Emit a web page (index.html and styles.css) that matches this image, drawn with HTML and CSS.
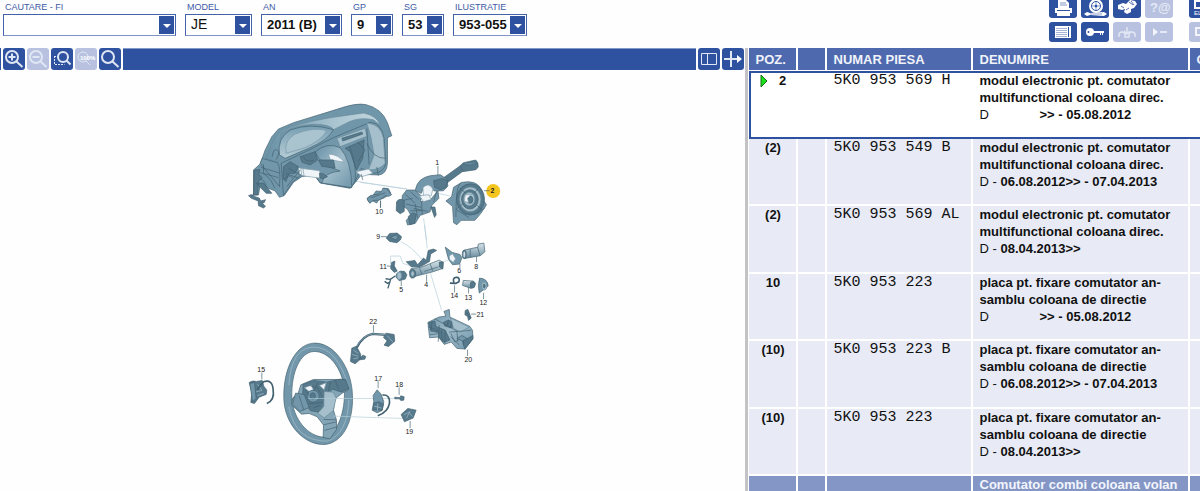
FILE: index.html
```html
<!DOCTYPE html>
<html lang="ro">
<head>
<meta charset="utf-8">
<title>Catalog piese</title>
<link rel="stylesheet" href="styles.css">
</head>
<body>
<header class="topbar">
  <form class="filters">
    <div class="field search"><label for="fi">CAUTARE - FI</label><div class="picker"><select id="fi"><option></option></select></div></div>
    <div class="field model"><label for="model">MODEL</label><div class="picker"><select id="model"><option>JE</option></select></div></div>
    <div class="field year"><label for="an">AN</label><div class="picker"><select id="an"><option>2011 (B)</option></select></div></div>
    <div class="field group"><label for="gp">GP</label><div class="picker"><select id="gp"><option>9</option></select></div></div>
    <div class="field group"><label for="sg">SG</label><div class="picker"><select id="sg"><option>53</option></select></div></div>
    <div class="field figure-no"><label for="il">ILUSTRATIE</label><div class="picker"><select id="il"><option>953-055</option></select></div></div>
  </form>
  <div class="actions">
    <div class="tiles">
      <button class="tile" aria-label="Print"><svg viewBox="0 0 28 20"><path fill="#fff" d="M9 2h8l3 3v5H9z"/><path d="M11 5h6M11 7h7" stroke="#8396c8"/><path fill="#fff" d="M6 10h17v5H6z"/><path d="M8 12.500h13" stroke="#2f52a0"/><path fill="#fff" d="M8 15h13v3H8z"/></svg></button>
      <button class="tile" aria-label="Tyres"><svg viewBox="0 0 28 20"><circle cx="15" cy="8" r="7" fill="#fff"/><circle cx="15" cy="8" r="4.500" fill="none" stroke="#2f52a0"/><circle cx="15" cy="8" r="1.500" fill="#2f52a0"/><path d="M15 4v3M11 8h3M16 8h3M15 9v3" stroke="#8fa1cf"/><path d="M3 16l3-2 3 1 14-1 3 2-3 2-14-1-3 1z" fill="#fff"/><path d="M9 16h12" stroke="#8fa1cf"/></svg></button>
      <button class="tile" aria-label="Parts"><svg viewBox="0 0 28 20"><path fill="#fff" d="M5 7l5-2 3 1 4-4 5 1 2 3-3 4-3 1 0 3-4 2-3-2 1-3-3 1-4-1z"/><path d="M8 8l3 2M16 4l4 3M13 12l3-2M18 3l3 4" stroke="#5f78b8"/></svg></button>
      <button class="tile off" aria-label="Help" disabled><svg viewBox="0 0 28 20"><text x="5" y="14" class="glyph">?@</text></svg></button>
      <button class="tile" aria-label="List"><svg viewBox="0 0 28 20"><path fill="#fff" d="M6 4h16v12H6z"/><path d="M7 6.500h11M7 8.500h11M7 10.500h11M7 12.500h11M7 14.500h11" stroke="#a7b3d7"/><path d="M19.500 5v10" stroke="#2f52a0"/></svg></button>
      <button class="tile" aria-label="Key"><svg viewBox="0 0 28 20"><circle cx="9" cy="10" r="4" fill="#fff"/><circle cx="7.500" cy="10" r="1" fill="#2f52a0"/><path d="M12 10h11" stroke="#fff" stroke-width="2"/><path d="M19.500 10v3M21.500 10v3" stroke="#fff"/></svg></button>
      <button class="tile off" aria-label="Connect" disabled><svg viewBox="0 0 28 20"><path d="M6 15v-2q0-3 3-3t3 3v2h4v-2q0-3 3-3t3 3v2M14 5v6M11 9l3 3 3-3" fill="none" stroke="#e1e6f3" stroke-width="1.500"/></svg></button>
      <button class="tile off" aria-label="Step" disabled><svg viewBox="0 0 28 20"><path d="M8 6l5 4-5 4z" fill="#f3f5fb"/><path d="M15 10h7" stroke="#f3f5fb" stroke-width="1.500"/></svg></button>
    </div>
    <div class="tiles narrow">
      <button class="tile" aria-label="ELSA"><svg viewBox="0 0 28 20"><rect x="6" y="3" width="14" height="7" fill="none" stroke="#fff" stroke-width="2"/><text x="5" y="17" class="micro">EL</text></svg></button>
      <button class="tile off" aria-label="Screen" disabled><svg viewBox="0 0 28 20"><path d="M7 6h14v7H7z" fill="none" stroke="#f3f5fb" stroke-width="2"/></svg></button>
    </div>
  </div>
</header>
<main class="workspace">
  <section class="drawing">
    <div class="toolbar">
      <span class="lead"></span>
      <button class="tool" aria-label="Zoom in"><svg viewBox="0 0 22 22"><circle cx="9" cy="9" r="6"/><path d="M13.500 13.500l6 5.500M5.500 9h7M9 5.500v7"/></svg></button>
      <button class="tool off" aria-label="Zoom out" disabled><svg viewBox="0 0 22 22"><circle cx="9" cy="9" r="6"/><path d="M13.500 13.500l6 5.500M5.500 9h7"/></svg></button>
      <button class="tool" aria-label="Zoom area"><svg viewBox="0 0 22 22"><path class="dash" d="M3.500 8v8.500h10M3 8.500h4"/><circle cx="12" cy="9" r="5"/><path d="M15.500 12.500l4 4"/></svg></button>
      <button class="tool off" aria-label="Zoom 100%" disabled><svg viewBox="0 0 22 22"><circle class="thin" cx="8" cy="9" r="5"/><path class="thin" d="M11 13l4 4"/><text class="percent" x="5" y="12">100%</text></svg></button>
      <button class="tool" aria-label="Search"><svg viewBox="0 0 22 22"><circle cx="9" cy="9" r="6"/><path d="M13.500 13.500l6 5.500"/></svg></button>
      <span class="bar"></span>
      <button class="tool" aria-label="Split view"><svg viewBox="0 0 22 22"><path class="thin" d="M3.500 5.500h15v11h-15zM9.500 5.500v11"/></svg></button>
      <button class="tool" aria-label="Move divider"><svg viewBox="0 0 22 22"><path d="M2 11h15M9 3v7M9 12v7"/><path class="solid" d="M15 7l5 4-5 4z"/></svg></button>
    </div>
    <svg class="exploded" viewBox="0 71 744 420" role="img" aria-label="Coloana de directie">
      <defs>
        <linearGradient id="shell" x1="0" y1="0" x2="1" y2="1"><stop offset="0" stop-color="#668fa5"/><stop offset=".5" stop-color="#a0bcca"/><stop offset="1" stop-color="#6f96aa"/></linearGradient>
        <linearGradient id="face" x1="0" y1="0" x2="0" y2="1"><stop offset="0" stop-color="#789fb3"/><stop offset="1" stop-color="#b5ccd6"/></linearGradient>
        <linearGradient id="tube" x1="0" y1="0" x2="0" y2="1"><stop offset="0" stop-color="#d9e5ea"/><stop offset="1" stop-color="#64899d"/></linearGradient>
        <linearGradient id="hood" x1="0" y1="0" x2="1" y2="0"><stop offset="0" stop-color="#6890a5"/><stop offset=".6" stop-color="#a9c4d0"/><stop offset="1" stop-color="#c2d6de"/></linearGradient>
      </defs>
      <g class="part" transform="translate(240 95) scale(.333)">
        <path class="guide" d="M255 245L500 282"/>
        <path fill="#7096aa" d="M60 207L75 165 95 125 115 102 160 83 290 43Q350 22 378 29 425 40 442 83L455 122 442 128V205Q440 238 415 240L365 238 345 263 330 280 240 264 222 240 185 245 160 262 132 302 118 307 105 288 60 270 55 300 40 300V225z"/>
        <path fill="url(#hood)" stroke="#6a8b9c" d="M75 190L100 135 122 107Q170 85 270 68L370 54Q410 62 420 90L400 74Q360 66 330 79L280 104Q270 88 220 88 165 90 122 115L112 200z"/>
        <path fill="url(#face)" d="M118 180Q110 130 150 105 210 82 280 104 265 135 205 160L135 190z"/>
        <path fill="#a9c3cf" stroke="#7797a7" d="M138 175Q130 137 165 117 220 95 260 107 245 135 195 158z"/>
        <path class="mid" d="M66 190L112 203Q122 215 118 275L60 205zM123 205L205 166 280 128 390 82Q425 85 432 130L437 205Q430 235 398 235L364 220 345 258 333 278 240 263 222 238 180 242 158 260 130 301z"/>
        <path class="light" d="M290 130L375 100 380 124 300 155zM380 84Q422 87 430 130L435 205Q420 225 385 225L402 180 392 125z"/>
        <path class="dark" d="M305 130L365 111 368 117 308 138zM315 160L372 135 368 190 349 225 330 170z"/>
        <path fill="url(#shell)" d="M225 170Q260 140 300 158 335 200 335 278L245 264Q252 232 300 228 240 210 225 170z"/>
        <path class="white" d="M265 177Q295 178 313 202L270 194zM348 230L385 222 398 235 365 245z"/>
        <path class="dark" d="M130 215L150 200 175 215 165 235 147 235 137 260 128 250zM180 185L225 170 232 195 210 210 186 202zM235 195L280 195 285 220 245 214z"/>
        <path class="white" d="M182 220L238 227 243 250 185 242zM175 219L188 219 192 244 178 238z"/>
        <path class="dark" d="M238 235L250 237 262 245 248 251 239 249z"/>
        <path fill="none" d="M138 236L175 249M145 220L182 240M140 275L180 225M130 255Q145 234 158 249M190 185Q195 204 220 196M380 145Q400 190 434 190M380 100L387 209M352 140L375 165 354 200M70 208V235L115 248M48 232Q85 230 104 280M48 248Q75 250 80 279M62 217L118 234M96 185Q100 158 111 165T107 194M328 155Q350 205 345 260M363 237L368 255M410 216L415 242"/>
        <path class="dark" d="M42 225L60 224 55 236 66 249 55 260 52 300 40 300zM25 302Q38 295 44 305L57 309 62 318 76 314 72 323 66 325 76 334 70 339 55 332 54 318 34 310zM48 265L70 264 95 295 78 295z"/>
        <path class="mid" d="M382 315Q385 300 398 302L408 288 430 290 432 280 445 281 452 295 440 304 430 310 415 315 410 324 398 318 388 323z"/>
        <path fill="none" d="M393 308L440 290M403 298L413 312M421 318V339"/>
      </g>
      <g class="part" transform="translate(360 150) scale(.333)">
        <path class="guide" d="M0 97L140 117M190 205L199 270M225 128L270 138"/>
        <path class="dark" d="M246 86L296 50 310 38 346 30Q355 35 354 51L347 59 306 65 257 101z"/>
        <path class="mid" d="M300 47L308 62M307 40Q325 50 352 40"/>
        <path class="mid" d="M165 122Q170 85 210 77L240 74 260 87 263 108 250 122 222 123Q205 98 190 113L183 130z"/>
        <path class="dark" d="M220 92L247 85 262 92 258 112 240 119 223 112z"/>
        <path class="mid" d="M126 137L139 120 163 120 184 138 181 155 210 150 233 122 236 145 215 166 209 186 180 196 165 220 142 225 138 211 152 196 142 178 126 167z"/>
        <path class="white" d="M188 113Q205 95 218 117L213 137 190 139z"/>
        <path class="dark" d="M109 155Q118 143 132 151L132 184 120 191 108 182zM144 200Q156 183 168 193L163 220 149 224zM212 171L224 171 228 194 223 202z"/>
        <path class="white" d="M178 137L205 134 213 148 190 155z"/>
        <path fill="none" d="M135 132L165 160M151 125L175 148M137 162L183 172M160 175L203 184M165 162L172 203M184 155L186 194M132 150L157 145M151 182L184 182M230 122L220 155M233 48V75"/>
        <path class="mid" d="M257 153L274 140 280 112 304 97Q350 88 365 120L370 151 379 164 362 190 344 211 303 211 290 224 280 218 277 169z"/>
        <ellipse class="dark" cx="331" cy="148" rx="42" ry="47"/><ellipse class="light" cx="330" cy="148" rx="32" ry="37"/><ellipse class="dark" cx="329" cy="148" rx="25" ry="29"/><ellipse class="light" cx="327" cy="147" rx="17" ry="20"/><ellipse class="dark" cx="329" cy="149" rx="9" ry="11"/>
        <path class="white" d="M315 135L333 133 322 145 325 158 312 153z"/>
        <path fill="none" d="M304 98Q289 105 288 155L287 201M299 113L316 129M343 127L354 116M349 164L364 178M309 160L287 178M290 180L327 203M350 192L375 172"/>
        <circle class="spot" cx="399" cy="123" r="21"/><path d="M371 122h17"/>
        <path class="mid" d="M20 145L34 136 54 132 65 122 68 114 80 116 94 134 86 139 75 137 57 150 38 151 29 160z"/>
        <path fill="none" d="M61 151V173M31 144L75 128M62 260h18"/>
      </g>
      <g class="part" transform="translate(370 225) scale(.333)">
        <path class="guide" d="M163 0L171 70M181 145L214 255M92 50Q125 65 156 104M61 117V93H90L98 115 130 125M205 114L235 105"/>
        <path class="dark" d="M48 39L58 25 81 24 94 35 90 45 80 53 58 49z"/><path class="mid" d="M60 37L78 29 84 38 75 44z"/>
        <path class="dark" d="M108 110L134 106 142 119 160 99 168 106 174 76 190 72 199 76 181 87 178 109 149 126 123 125z"/>
        <path fill="url(#tube)" d="M118 140L123 130 151 127 207 105 219 112 218 130 185 141 138 153 124 158z"/><ellipse class="dark" cx="127" cy="146" rx="9" ry="13"/><ellipse class="light" cx="127" cy="146" rx="5" ry="8"/><path fill="none" d="M148 130L155 147M180 117L187 137M162 139L205 125M169 149V170"/>
        <path class="dark" d="M207 111L219 111 217 132 208 126z"/>
        <path class="mid" d="M225 66L246 82 269 88 275 98 268 117 247 119 235 103z"/><path class="white" d="M237 93L247 86 256 101 249 112 238 103z"/>
        <path fill="url(#tube)" d="M282 75L323 66 324 57 341 54 344 80 330 92 284 100z"/><ellipse class="dark" cx="282" cy="88" rx="6" ry="13"/><ellipse class="white" cx="282" cy="88" rx="3" ry="9"/><path fill="none" d="M300 72V96M322 66L329 91M319 94V111M269 117V128"/>
        <path class="dark" d="M79 146Q88 134 103 139L110 149 105 162 87 167 78 157z"/><ellipse class="light" cx="87" cy="152" rx="7" ry="11"/><path fill="none" stroke-width="4" d="M76 152L60 163 46 161M61 163L53 190M43 169L52 175 61 170"/><path d="M93 167V183"/>
        <path class="dark" d="M64 112L74 108 72 123 81 138 72 142 61 130z"/><path d="M50 123h12M67 122L76 132"/>
        <path fill="none" stroke-width="5" d="M251 172Q246 158 258 157T266 170L256 175 239 174"/><path fill="none" d="M253 181V202"/>
        <path fill="url(#tube)" d="M279 166L309 168 316 174 313 184 303 190 277 181z"/><ellipse class="dark" cx="307" cy="179" rx="7" ry="10"/><path d="M295 188V205M340 203V222"/>
        <path class="mid" d="M328 159Q352 160 354 183L327 204Q322 182 328 159z"/><ellipse class="light" cx="342" cy="183" rx="8" ry="12"/><ellipse class="dark" cx="342" cy="183" rx="3" ry="6"/>
        <path class="dark" d="M285 256L293 253 297 263 303 279 295 286 292 274 284 269z"/><path d="M303 267h15M290 261L299 281"/>
        <path fill="url(#shell)" d="M173 292L206 276 227 273 221 259 237 253 239 276 299 304 307 316 308 342 283 372 260 370 243 351 222 358 205 336 178 338z"/>
        <path class="dark" d="M175 293L194 288 197 304 225 315 239 345 221 352 205 336 207 323 182 318zM219 292L234 285 254 294 245 309 224 303zM277 349L308 331 308 341 284 373z"/>
        <path class="light" d="M241 279L297 306 270 321 250 309z"/>
        <path fill="none" d="M174 305L204 318M185 288L183 315M193 281L260 318 263 350M207 300L204 350M179 329L204 326M213 316L216 350M225 320L224 356M236 321L303 316M242 325L254 351 280 334 280 362M241 335L267 359M235 286L231 301M245 290L241 306M292 374V393"/>
        <path class="mid" d="M260 340L275 331 290 340 277 348z"/>
      </g>
      <g class="part" transform="translate(240 310) scale(.333)">
        <path class="mid" fill-rule="evenodd" d="M221 99C169 101 129 171 131 265 133 345 195 407 255 403 308 397 340 336 337 256 335 172 281 96 221 99zM221 124C267 123 307 176 313 238 315 304 295 366 255 381 204 382 158 326 155 262 153 184 181 126 221 124z"/>
        <path fill="none" class="shine" d="M146 225Q154 110 222 111T324 227M146 290Q165 395 263 393 322 370 326 270"/>
        <path fill="#83a5b5" d="M154 284L158 263 174 249 182 224 220 208 315 208 326 238 305 250 285 266 280 300 289 330 289 358 270 386 249 382 250 345 231 320 207 310 184 312z"/>
        <path class="dark" d="M189 222L220 211 260 216 300 207 317 209 326 235 304 246 277 237 264 249 255 288 236 306 211 302 187 264z"/>
        <path class="light" d="M252 244L279 246 288 264 279 302 252 323 233 309 251 289z"/>
        <path class="mid" d="M157 282L166 249 192 253 207 292 179 304z"/>
        <path class="white" d="M193 233L213 225 220 240 207 244zM238 226L258 218 252 239z"/>
        <ellipse class="mid" cx="219" cy="258" rx="18" ry="18"/><ellipse class="dark" cx="218" cy="257" rx="8" ry="9"/>
        <path fill="none" d="M208 226L232 233 247 260M195 240L207 255M234 217L222 241M271 214L265 242M285 210L295 236M205 281L247 277M221 293L242 285M177 256L191 300M250 344L290 335M253 361L288 351M250 328L288 329"/>
        <path class="guide" d="M205 265H465M280 318L486 325"/>
        <path class="dark" d="M27 217Q38 210 49 214L66 211 71 228 80 240 78 253 57 261 43 280 32 277 35 247z"/>
        <path class="mid" d="M29 220L43 217 48 265 37 275z"/><path class="shine" fill="none" d="M48 245L65 241M52 256L71 250M52 222L65 240"/><path fill="none" stroke-width="5" d="M51 238L70 215Q97 206 99 239 104 270 80 280"/><path d="M65 187V208M400 45V67M414 211V234M477 232V254M510 333V354"/>
        <path class="dark" d="M335 114L349 108 362 133 359 149 345 161 331 154zM438 69L462 73 464 93 445 109 432 105 441 92 430 82zM358 143L369 135 377 139 374 147 359 149z"/>
        <path fill="none" stroke-width="7" d="M350 112Q367 77 397 71L438 74"/><path fill="none" class="shine" d="M350 109Q367 77 397 71L438 74M340 120L355 130M336 133L354 138M340 146L355 143M442 77L458 95"/>
        <path class="mid" d="M399 256L411 239 423 252 431 275 426 301 411 308 396 300 401 275z"/><path class="dark" d="M401 279L416 275 430 282 426 300 399 299z"/><path class="shine" fill="none" d="M402 288L425 294M413 280L412 302"/><path fill="none" stroke-width="5" d="M427 255Q450 252 448 280 443 307 413 317"/>
        <path class="dark" d="M464 261L480 263 482 257 492 260 491 270 482 271 478 266 464 266zM483 313L503 295 528 300 519 324 493 335z"/><path class="shine" fill="none" d="M491 314L506 307 517 319M499 324L510 303"/>
      </g>
      <g class="marks">
        <text x="437" y="165">1</text><text class="hot" x="492" y="193">2</text><text x="379" y="214">10</text><text x="378" y="239">9</text><text x="426" y="287">4</text><text x="401" y="292">5</text><text x="459" y="273">6</text><text x="476" y="269">8</text><text x="383" y="269">11</text><text x="454" y="298">14</text><text x="468" y="300">13</text><text x="483" y="305">12</text><text x="480" y="317">21</text><text x="468" y="362">20</text><text x="373" y="324">22</text><text x="261" y="372">15</text><text x="378" y="381">17</text><text x="399" y="387">18</text><text x="409" y="434">19</text>
      </g>
    </svg>
  </section>
  <section class="parts">
    <table>
      <colgroup><col class="c-pos"><col class="c-flag"><col class="c-num"><col class="c-name"><col class="c-rest"></colgroup>
      <thead><tr><th>POZ.</th><th></th><th>NUMAR PIESA</th><th>DENUMIRE</th><th>C</th></tr></thead>
      <tbody>
        <tr class="current"><td class="pos"><svg class="pointer" viewBox="0 0 8 14"><path d="M1 1l6 6-6 6z"/></svg>2</td><td></td><td class="num">5K0 953 569 H</td><td>modul electronic pt. comutator<br>multifunctional coloana direc.<br><span class="from wide">D</span>&gt;&gt; - 05.08.2012</td><td></td></tr>
        <tr><td class="pos">(2)</td><td></td><td class="num">5K0 953 549 B</td><td>modul electronic pt. comutator<br>multifunctional coloana direc.<br><span class="from">D - </span>06.08.2012&gt;&gt; - 07.04.2013</td><td></td></tr>
        <tr><td class="pos">(2)</td><td></td><td class="num">5K0 953 569 AL</td><td>modul electronic pt. comutator<br>multifunctional coloana direc.<br><span class="from">D - </span>08.04.2013&gt;&gt;</td><td></td></tr>
        <tr><td class="pos">10</td><td></td><td class="num">5K0 953 223</td><td>placa pt. fixare comutator an-<br>samblu coloana de directie<br><span class="from wide">D</span>&gt;&gt; - 05.08.2012</td><td></td></tr>
        <tr><td class="pos">(10)</td><td></td><td class="num">5K0 953 223 B</td><td>placa pt. fixare comutator an-<br>samblu coloana de directie<br><span class="from">D - </span>06.08.2012&gt;&gt; - 07.04.2013</td><td></td></tr>
        <tr><td class="pos">(10)</td><td></td><td class="num">5K0 953 223</td><td>placa pt. fixare comutator an-<br>samblu coloana de directie<br><span class="from">D - </span>08.04.2013&gt;&gt;</td><td></td></tr>
        <tr class="section"><td></td><td></td><td></td><td>Comutator combi coloana volan</td><td></td></tr>
      </tbody>
    </table>
  </section>
</main>
</body>
</html>
```
FILE: styles.css
```css
:root {
  --blue: #2f52a0;
  --pale: #b8c2e0;
}
* { box-sizing: border-box; }
body {
  margin: 0;
  height: 100vh;
  display: flex;
  flex-direction: column;
  overflow: hidden;
  background: #fefefe;
  color: #111;
  font: bold 13px/17px "Liberation Sans", Arial, sans-serif;
}
button { border: 0; padding: 0; }
.topbar {
  display: flex;
  justify-content: space-between;
  flex: none;
  height: 48px;
  overflow: hidden;
}
.filters { display: flex; gap: 9px; padding: 2px 3px; }
.field label {
  display: block;
  padding-left: 2px;
  color: #3d5ba5;
  font-size: 9px;
  font-weight: normal;
  line-height: 10px;
  margin-bottom: 2px;
  white-space: nowrap;
}
.search { width: 173px; }
.model { width: 67px; }
.year { width: 81px; }
.group { width: 42px; }
.figure-no { width: 74px; }
.picker { position: relative; }
.picker select {
  display: block;
  appearance: none;
  width: 100%;
  height: 22px;
  padding: 0 0 2px 5px;
  border: 1px solid #4461a9;
  border-bottom-color: #8093c6;
  border-radius: 0;
  background: #fff;
  color: #111;
  font: inherit;
}
.model select { font-size: 14px; font-weight: normal; }
.picker::before {
  content: "";
  position: absolute;
  top: 2px;
  right: 2px;
  width: 15px;
  height: 18px;
  background: var(--blue);
  pointer-events: none;
}
.picker::after {
  content: "";
  position: absolute;
  top: 10px;
  right: 5px;
  border: 4px solid transparent;
  border-top-color: #fff;
  border-bottom: 0;
  pointer-events: none;
}
.actions { display: flex; align-items: flex-end; gap: 16px; padding-bottom: 6px; }
.tiles { display: grid; grid-template-columns: repeat(4, 28px); gap: 4px; }
.tiles.narrow { grid-template-columns: 28px; margin-right: -17px; }
.tile { height: 20px; border-radius: 3px; background: var(--blue); }
.tile svg, .tool svg { display: block; width: 100%; height: 100%; }
.tile.off, .tool.off { background: var(--pale); }
.glyph { fill: #e5e9f5; font-size: 13px; font-weight: bold; }
.micro { fill: #fff; font-size: 6px; }

.workspace { flex: 1; min-height: 0; display: flex; }
.drawing { flex: 747; min-width: 0; border-right: 3px solid #c3c3c5; }
.toolbar { display: flex; gap: 2px; height: 22px; padding-right: 1px; }
.lead { width: 1px; background: var(--blue); }
.bar { flex: 1; background: var(--blue); border-top: 1px solid #8298c8; }
.tool { width: 22px; border-radius: 3px; background: var(--blue); }
.tool svg { fill: none; stroke: #dfe6f4; stroke-width: 2; }
.tool .dash { stroke-width: 1; stroke-dasharray: 2 1; }
.tool .thin { stroke-width: 1; }
.tool .solid { fill: #fff; stroke: none; }
.percent { fill: #fff; stroke: none; font-size: 6px; font-weight: bold; }
.exploded { display: block; width: 100%; margin-top: 1px; }
.part { stroke: #416070; stroke-width: 2; stroke-linejoin: round; }
.part .light { fill: #a5c0cc; stroke: #6a8b9c; }
.part .mid { fill: #7397aa; }
.part .dark { fill: #56798c; }
.part .white { fill: #eef4f7; stroke: #7e9cab; }
.part .guide { fill: none; stroke: #b4cdda; }
.part .shine { stroke: #a5c0cd; }
.part .spot { fill: #f4c51e; stroke: none; }
.marks text {
  fill: #222;
  font-size: 7px;
  font-weight: normal;
  text-anchor: middle;
}
.marks .hot { font-weight: bold; }

.parts { flex: 453; min-width: 0; overflow: hidden; padding-left: 1px; }
table {
  width: 100%;
  min-width: 540px;
  table-layout: fixed;
  border-collapse: separate;
  border-spacing: 0;
}
.c-pos { width: 49px; }
.c-flag { width: 29px; }
.c-num { width: 146px; }
.c-name { width: 217px; }
th {
  height: 23px;
  padding: 1px 0 0 7px;
  border-right: 2px solid #fff;
  border-bottom: 1px solid #fff;
  background: #4f69af;
  color: #f0f3fa;
  text-align: left;
  white-space: nowrap;
}
td {
  height: 67px;
  padding: 0 0 0 7px;
  border-right: 2px solid #fff;
  border-bottom: 2px solid #fff;
  background: #e8ebf5;
  vertical-align: top;
  white-space: nowrap;
}
tr:nth-child(odd) td { height: 68px; }
.pos { padding: 0 0 0 2px; text-align: center; }
.num { font: 15px/18px "Liberation Mono", "Courier New", monospace; }
.from { font-weight: normal; }
.from.wide { display: inline-block; width: 60px; }
.current { outline: 2px solid var(--blue); outline-offset: -2px; }
.current td { padding-top: 1px; background: #fff; }
.pointer {
  width: 8px;
  height: 14px;
  margin: -2px 11px 0 0;
  vertical-align: middle;
  fill: #1be01b;
  stroke: #176b17;
}
.section td { background: #8496c6; color: #f2f5fb; }
```
